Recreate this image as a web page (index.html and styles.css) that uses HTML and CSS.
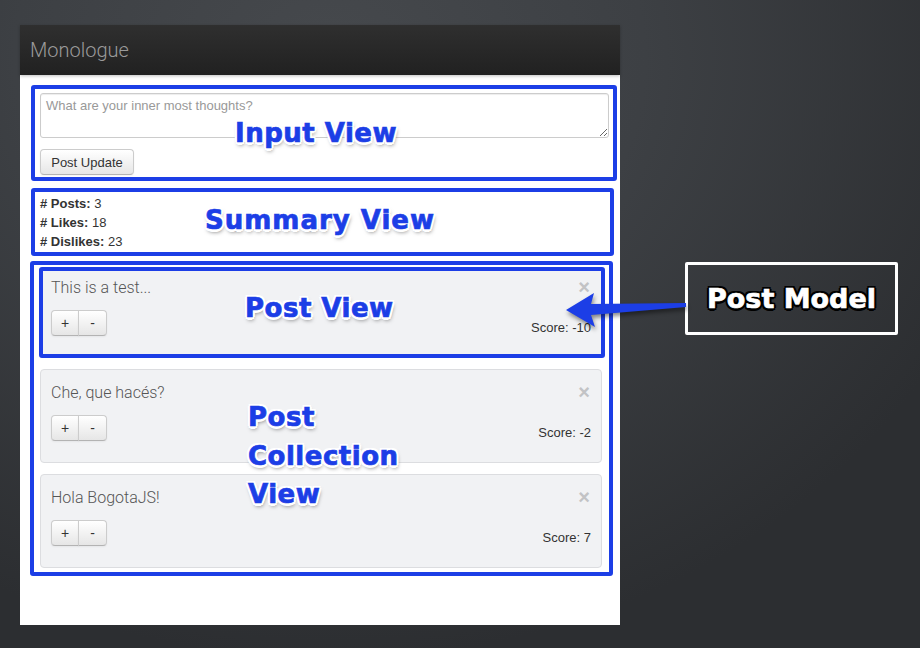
FILE: index.html
```html
<!DOCTYPE html>
<html>
<head>
<meta charset="utf-8">
<link rel="stylesheet" href="styles.css">
</head>
<body>
<div class="window">
  <div class="navbar"><span class="brand">Monologue</span></div>
  <div class="content">
    <div class="view view-input">
      <textarea class="thoughts" placeholder="What are your inner most thoughts?"></textarea>
      <button class="btn btn-post">Post Update</button>
    </div>
    <div class="view view-summary">
      <div><b># Posts:</b> 3</div>
      <div><b># Likes:</b> 18</div>
      <div><b># Dislikes:</b> 23</div>
    </div>
    <div class="view view-collection">
      <div class="post post-hl">
        <div class="post-top"><span class="post-text">This is a test...</span><span class="close">×</span></div>
        <div class="post-bottom">
          <div class="btn-group"><button class="btn btn-sm btn-l">+</button><button class="btn btn-sm btn-r">-</button></div>
          <span class="score">Score: -10</span>
        </div>
      </div>
      <div class="post">
        <div class="post-top"><span class="post-text">Che, que hacés?</span><span class="close">×</span></div>
        <div class="post-bottom">
          <div class="btn-group"><button class="btn btn-sm btn-l">+</button><button class="btn btn-sm btn-r">-</button></div>
          <span class="score">Score: -2</span>
        </div>
      </div>
      <div class="post">
        <div class="post-top"><span class="post-text">Hola BogotaJS!</span><span class="close">×</span></div>
        <div class="post-bottom">
          <div class="btn-group"><button class="btn btn-sm btn-l">+</button><button class="btn btn-sm btn-r">-</button></div>
          <span class="score">Score: 7</span>
        </div>
      </div>
    </div>
  </div>
</div>

<div class="label l-input">Input View</div>
<div class="label l-summary">Summary View</div>
<div class="label l-post">Post View</div>
<div class="label l-collection">Post<br>Collection<br>View</div>

<div class="model">Post Model</div>
<svg class="arrow" width="140" height="60" viewBox="560 280 140 60">
  <path d="M566 310 L594 293 L591 304 L686 303 L686 307 L591 315 L595 327 Z" fill="#1c3ee6"/>
</svg>
</body>
</html>
```

FILE: styles.css
```css
html, body {
  margin: 0;
  padding: 0;
}
body {
  width: 920px;
  height: 648px;
  overflow: hidden;
  position: relative;
  font-family: "Liberation Sans", Arial, sans-serif;
  background: radial-gradient(ellipse 700px 600px at 330px 60px, #46494d 0%, #3d4044 45%, #2c2e31 100%);
}
.window {
  margin: 25px 0 0 20px;
  width: 600px;
  height: 600px;
  background: #fff;
}
.navbar {
  height: 50px;
  box-sizing: border-box;
  padding-left: 10px;
  display: flex;
  align-items: center;
  background: linear-gradient(#2f2f2f, #212121);
  box-shadow: 0 1px 3px rgba(0,0,0,0.25);
}
.brand {
  font-family: Roboto, "Liberation Sans", sans-serif;
  font-weight: 300;
  font-size: 20px;
  color: #9a9a9a;
}
.content {
  padding: 10px 3px 0 11px;
}
.view {
  border: 4px solid #1c3ee6;
  border-radius: 3px;
  box-sizing: border-box;
}
.view-input {
  padding: 4px 4px 2px 5px;
}
.thoughts {
  display: block;
  box-sizing: border-box;
  width: 100%;
  height: 45px;
  margin: 0 0 11px 0;
  padding: 4px 5px;
  border: 1px solid #ccc;
  border-radius: 3px;
  box-shadow: inset 0 1px 1px rgba(0,0,0,0.075);
  font-family: "Liberation Sans", Arial, sans-serif;
  font-size: 13px;
  line-height: 16px;
  color: #555;
  resize: vertical;
}
.thoughts::placeholder {
  color: #999;
}
.btn {
  height: 26px;
  box-sizing: border-box;
  border: 1px solid #ccc;
  border-bottom-color: #b3b3b3;
  border-radius: 4px;
  background: linear-gradient(#ffffff, #e6e6e6);
  box-shadow: inset 0 1px 0 rgba(255,255,255,0.2), 0 1px 2px rgba(0,0,0,0.05);
  font-family: "Liberation Sans", Arial, sans-serif;
  color: #333;
  margin: 0;
}
.btn-post {
  display: block;
  width: 94px;
  padding: 0;
  font-size: 13px;
}
.view-summary {
  margin-top: 7px;
  width: 583px;
  height: 68px;
  padding: 2px 5px 0 5px;
  font-size: 13px;
  line-height: 19px;
  color: #333;
}
.view-collection {
  margin-top: 5px;
  margin-left: -1px;
  width: 583px;
  padding: 2px 7px 4px 6px;
}
.post {
  box-sizing: border-box;
  height: 94px;
  background: #f1f2f4;
  border: 1px solid #dcdde0;
  border-radius: 4px;
  padding: 12px 10px 21px 10px;
}
.post + .post {
  margin-top: 11px;
}
.post-hl {
  height: 91px;
  border: 4px solid #1c3ee6;
  border-radius: 3px;
  margin: 0 -3px 0 -1px;
  padding: 6px 10px 18px 8px;
}
.post-top {
  display: flex;
  justify-content: space-between;
  align-items: center;
  height: 20px;
}
.post-text {
  font-family: Roboto, "Liberation Sans", sans-serif;
  font-weight: 300;
  font-size: 16px;
  color: #555;
}
.close {
  font-size: 20px;
  font-weight: bold;
  line-height: 20px;
  color: #c2c3c5;
  margin-right: 1px;
}
.post-bottom {
  margin-top: 13px;
  height: 26px;
  display: flex;
  justify-content: space-between;
  align-items: flex-end;
}
.btn-group {
  display: flex;
}
.btn-sm {
  width: 28px;
  padding: 0;
  font-size: 14px;
}
.btn-l {
  border-radius: 4px 0 0 4px;
}
.btn-r {
  border-radius: 0 4px 4px 0;
  margin-left: -1px;
  width: 29px;
}
.score {
  font-size: 13px;
  line-height: 16px;
  color: #333;
}
.label {
  position: absolute;
  font-family: "DejaVu Sans", sans-serif;
  font-weight: bold;
  font-size: 26px;
  line-height: 38.5px;
  letter-spacing: 0.5px;
  color: #1c3ee6;
  -webkit-text-stroke: 0.7px #1c3ee6;
  white-space: nowrap;
  text-shadow:
    2.5px 0 0 #fff, -2.5px 0 0 #fff, 0 2.5px 0 #fff, 0 -2.5px 0 #fff,
    1.8px 1.8px 0 #fff, -1.8px 1.8px 0 #fff, 1.8px -1.8px 0 #fff, -1.8px -1.8px 0 #fff,
    1px 3px 4px rgba(0,0,0,0.55);
}
.l-input { left: 235px; top: 114px; }
.l-summary { left: 205px; top: 201px; letter-spacing: 1px; }
.l-post { left: 245px; top: 289px; }
.l-collection { left: 248px; top: 398px; }
.model {
  position: absolute;
  left: 685px;
  top: 262px;
  width: 213px;
  height: 73px;
  box-sizing: border-box;
  border: 3px solid #fff;
  border-radius: 2px;
  display: flex;
  align-items: center;
  justify-content: center;
  font-family: "DejaVu Sans", sans-serif;
  font-weight: bold;
  font-size: 27px;
  color: #fff;
  -webkit-text-stroke: 0.7px #fff;
  text-shadow:
    2.5px 0 0 #000, -2.5px 0 0 #000, 0 2.5px 0 #000, 0 -2.5px 0 #000,
    1.8px 1.8px 0 #000, -1.8px 1.8px 0 #000, 1.8px -1.8px 0 #000, -1.8px -1.8px 0 #000;
}
.arrow {
  position: absolute;
  left: 560px;
  top: 280px;
  filter: drop-shadow(1px 3px 2px rgba(0,0,0,0.45));
}
```
